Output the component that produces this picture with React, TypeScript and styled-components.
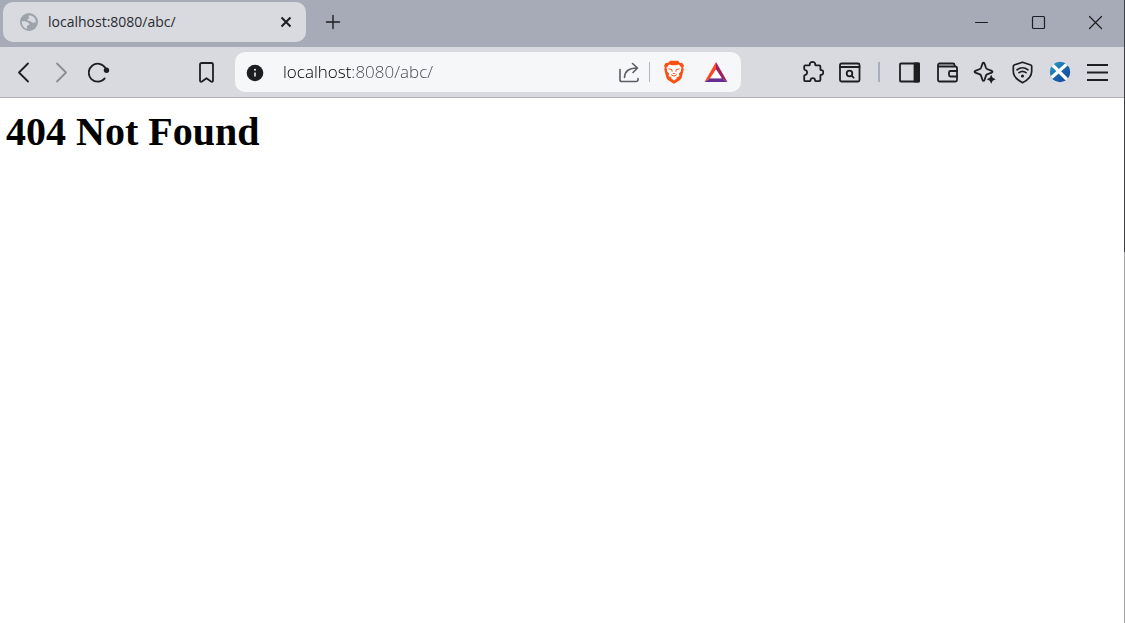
import React, { useState } from "react";
import styled, { createGlobalStyle } from "styled-components";

const uiFont = `"Open Sans", "Noto Sans", sans-serif`;

const GlobalStyle = createGlobalStyle`
  *, *::before, *::after { box-sizing: border-box; }
  body { margin: 0; background: #fff; }
`;

const Frame = styled.div`
  display: grid;
  grid-template-columns: minmax(0, 1fr) 1px;
  min-height: 100vh;
`;

const BrowserWindow = styled.div`
  display: flex;
  flex-direction: column;
  background: #fff;
`;

const WindowEdge = styled.div`
  background: linear-gradient(#3f3f42 252px, #a6a6a6 252px);
`;

const TitleBar = styled.header`
  display: flex;
  align-items: center;
  justify-content: space-between;
  height: 47px;
  padding: 0 0 3px 3px;
  background: #a7abb7;
`;

const TabStrip = styled.div`
  display: flex;
  align-items: center;
  gap: 8px;
`;

const Tab = styled.div`
  display: flex;
  align-items: center;
  gap: 9px;
  width: 303px;
  height: 40px;
  padding: 0 1px 0 16px;
  border-radius: 10px;
  background: #d9dae0;
`;

const TabTitle = styled.span`
  flex: 1;
  font: 400 14px/20px ${uiFont};
  color: #2a2b30;
`;

const Button = styled.button<{ $width?: number }>`
  display: flex;
  align-items: center;
  justify-content: center;
  flex: none;
  width: ${(p) => p.$width ?? 38}px;
  height: 36px;
  padding: 0;
  border: 0;
  border-radius: 8px;
  background: transparent;
  color: #1d1e22;

  &:disabled { color: #8b8d94; }
`;

const WindowControls = styled.div`
  display: flex;
`;

const Toolbar = styled.nav`
  display: flex;
  align-items: center;
  height: 51px;
  padding: 0 7px 0 5px;
  border-bottom: 1px solid #aeafb5;
  background: #d9dae0;
`;

const Group = styled.div`
  display: flex;
  align-items: center;
  flex: none;
`;

const BookmarkGroup = styled(Group)`
  margin: 0 9px 0 69px;
`;

const AddressBar = styled.form`
  display: flex;
  align-items: center;
  flex: 1;
  min-width: 0;
  height: 40px;
  margin-right: 52px;
  padding: 0 2px 0 1px;
  border-radius: 10px;
  background: #f6f7f9;
`;

const AddressInput = styled.input`
  flex: 1;
  min-width: 0;
  margin-left: 9px;
  padding: 0;
  border: 0;
  outline: 0;
  font: 300 17px/24px ${uiFont};
  color: transparent;
  background: linear-gradient(90deg, #000 70px, #44464c 70px);
  background-clip: text;
  -webkit-background-clip: text;
`;

const Divider = styled.span<{ $width: number; $margin: string; $color: string }>`
  width: ${(p) => p.$width}px;
  height: 20px;
  margin: ${(p) => p.$margin};
  background: ${(p) => p.$color};
`;

const Page = styled.main`
  flex: 1;
  padding: 11px 6px;
`;

const Heading = styled.h1`
  margin: 0;
  font: bold 40px/46px "Liberation Serif", "Times New Roman", serif;
  color: #000;
`;

type IconProps = { children: React.ReactNode; stroke?: number };

const Icon = ({ children, stroke = 1.8 }: IconProps) => (
  <svg
    width="24"
    height="24"
    viewBox="0 0 24 24"
    fill="none"
    stroke="currentColor"
    strokeWidth={stroke}
    strokeLinecap="round"
    strokeLinejoin="round"
    aria-hidden="true"
  >
    {children}
  </svg>
);

const Globe = () => (
  <svg width="20" height="20" viewBox="0 0 20 20" aria-hidden="true">
    <circle cx="10" cy="10" r="9" fill="#9ca3aa" />
    <path
      d="M10.5 3.2c-1 .5-1.2 1.4-.6 2 .8.7.3 1.3-.7 1.6-1.200.4-.9 1.500-.2 1.900 1.500.1 2.800.2 3.500 1.300.600.900 1.900.9 2.700.4.6-.4 1.200.1 1.700.8a7.200 7.200 0 0 0-6.400-8z"
      fill="#d9dae0"
    />
    <path
      d="M2.800 9.300c1.600-.2 4.300-.1 5.200.800.900.9 1.900.8 2.300 1.800.3 1-.8 1.300-1.800 1.500-.9.2-.6 1.100-.5 2.300l.2 1.300A7.300 7.300 0 0 1 2.800 9.300z"
      fill="#d9dae0"
    />
  </svg>
);

const BraveLion = () => (
  <svg width="24" height="24" viewBox="0 0 24 24" aria-hidden="true">
    <path
      d="M8 .8h8l2 2.200 2-.3 2 2.700-.8 2 .5 2-2.100 8.300c-.3 1-.8 1.700-1.600 2.300L13 23.300c-.7.500-1.300.5-2 0L6 20c-.8-.6-1.300-1.300-1.600-2.300L2.300 9.400l.5-2-.8-2 2-2.700 2 .3z"
      fill="#fb5013"
    />
    <path
      d="M7.200 4.600 10 5.200h4l2.800-.6 2.900 3.500-.8 1.500.2 1.400-2.400 3 .8 1.800-1.500 1.500-1.500-1 .5 1.900-3 2.400-3-2.400.5-1.900-1.500 1-1.500-1.500.8-1.800-2.400-3 .2-1.400-.8-1.500z"
      fill="#fff"
    />
    <path
      d="m6.500 8.800 3.400.8.200 2.200M17.500 8.800l-3.400.8-.2 2.200M9.200 14.800 12 16l2.800-1.200"
      fill="none"
      stroke="#fb5013"
      strokeWidth="1"
    />
    <path d="m10.300 13 1.700 1.300 1.700-1.300z" fill="#fb5013" />
  </svg>
);

const BatTriangle = () => (
  <svg width="24" height="24" viewBox="0 0 24 24" aria-hidden="true">
    <path d="M12 2 .5 22l5.800-3.800L12 9.500z" fill="#ff4724" />
    <path d="M12 2v7.500l5.700 8.700 5.800 3.800z" fill="#9e1f63" />
    <path d="m.5 22 5.800-3.800h11.400l5.800 3.800z" fill="#662d91" />
    <path d="m12 9.500-5.700 8.700h11.400z" fill="#fff" />
  </svg>
);

const BlueCross = () => (
  <svg width="24" height="24" viewBox="0 0 24 24" aria-hidden="true">
    <defs>
      <linearGradient id="cross-blue" x1="0" y1="0" x2="1" y2="1">
        <stop offset="0" stopColor="#2eb4cf" />
        <stop offset=".5" stopColor="#1767ae" />
        <stop offset="1" stopColor="#173a96" />
      </linearGradient>
      <clipPath id="cross-disc">
        <circle cx="12" cy="12" r="10.200" />
      </clipPath>
    </defs>
    <g clipPath="url(#cross-disc)">
      <rect width="24" height="24" fill="url(#cross-blue)" />
      <path d="M4 4.500 19.500 20" stroke="#fff" strokeWidth="3.200" />
      <path d="M19 4 3 18" stroke="#fff" strokeWidth="3.200" />
    </g>
  </svg>
);

export default function App() {
  const [address, setAddress] = useState("localhost:8080/abc/");

  return (
    <>
      <GlobalStyle />
      <Frame>
        <BrowserWindow>
          <TitleBar>
            <TabStrip>
              <Tab>
                <Globe />
                <TabTitle>localhost:8080/abc/</TabTitle>
                <Button aria-label="Close tab">
                  <Icon stroke={2}>
                    <path d="m7.500 7.500 9 9M16.500 7.500l-9 9" strokeLinecap="butt" />
                  </Icon>
                </Button>
              </Tab>
              <Button aria-label="New tab">
                <Icon stroke={1.4}>
                  <path d="M5.500 12h13M12 5.500v13" />
                </Icon>
              </Button>
            </TabStrip>
            <WindowControls>
              <Button $width={57} aria-label="Minimize">
                <Icon stroke={1}>
                  <path d="M5.500 12.500h12" />
                </Icon>
              </Button>
              <Button $width={57} aria-label="Maximize">
                <Icon stroke={1.2}>
                  <rect x="5.500" y="6.500" width="12" height="12" rx="1" />
                </Icon>
              </Button>
              <Button $width={57} aria-label="Close window">
                <Icon stroke={1.2}>
                  <path d="m5.500 6.500 12 12M17.500 6.500l-12 12" />
                </Icon>
              </Button>
            </WindowControls>
          </TitleBar>

          <Toolbar aria-label="Browser toolbar">
            <Group>
              <Button aria-label="Back">
                <Icon>
                  <path d="m16 3.500-9 9 9 9" />
                </Icon>
              </Button>
              <Button aria-label="Forward" disabled>
                <Icon>
                  <path d="m7 3.500 9 9-9 9" />
                </Icon>
              </Button>
              <Button aria-label="Reload">
                <Icon>
                  <path d="M17.300 7.800A9 9 0 1 0 16.700 18.400" />
                  <circle cx="18.500" cy="10.200" r="2.700" fill="currentColor" stroke="none" />
                </Icon>
              </Button>
            </Group>
            <BookmarkGroup>
              <Button aria-label="Bookmark this page">
                <Icon>
                  <path d="M5 20.500v-16a1.500 1.500 0 0 1 1.500-1.500h10a1.500 1.500 0 0 1 1.500 1.500v16c0 1.300-1 1.700-2 .9L11.500 18.200l-4.500 3.200c-1 .8-2 .4-2-.9z" />
                </Icon>
              </Button>
            </BookmarkGroup>

            <AddressBar onSubmit={(e) => e.preventDefault()}>
              <Button type="button" aria-label="Site information">
                <Icon>
                  <circle cx="12" cy="13" r="8.300" fill="currentColor" stroke="none" />
                  <circle cx="12" cy="9.800" r="1" fill="#f6f7f9" stroke="none" />
                  <path d="M12 12.500v4" stroke="#f6f7f9" strokeWidth="1.500" strokeLinecap="butt" />
                </Icon>
              </Button>
              <AddressInput
                aria-label="Address"
                value={address}
                spellCheck={false}
                onChange={(e) => setAddress(e.target.value)}
              />
              <Button type="button" aria-label="Share">
                <Icon stroke={1.6}>
                  <g stroke="#5b5d63">
                    <path d="M3 9.500v10.200a1.800 1.800 0 0 0 1.800 1.800h14.400a1.800 1.800 0 0 0 1.800-1.800v-1.200" />
                    <path d="M7.500 17.500c.2-6 4-9.500 12.500-9.500M15.500 3.500 20.500 8l-4.500 4.500" />
                  </g>
                </Icon>
              </Button>
              <Divider $width={1} $margin="0 5px 0 1px" $color="#b2b4ba" />
              <Button type="button" aria-label="Brave Shields">
                <BraveLion />
              </Button>
              <Button type="button" $width={46} aria-label="Brave Rewards">
                <BatTriangle />
              </Button>
            </AddressBar>

            <Group>
              <Button aria-label="Extensions">
                <Icon>
                  <path d="M5.300 5.300h4c.4 0 .6-.3.5-.7C9.500 2.900 11 1.900 12.500 1.900s3 1 2.700 2.700c-.1.400.1.700.5.700h3.500c.7 0 1.200.5 1.200 1.200v3c0 .4.300.6.700.6 1.300-.2 2.200.900 2.200 2.300s-.9 2.500-2.200 2.300c-.4 0-.7.2-.7.600v4.500c0 .9-.5 1.400-1.300 1.400h-3.300c-.5 0-.7-.3-.7-.700-.1-1.500-1-2.300-2.300-2.300s-2.200.8-2.300 2.300c0 .4-.2.7-.7.7H5.500c-.8 0-1.300-.5-1.300-1.300v-4c0-.4.2-.6.600-.7 1.500-.3 2.300-1.200 2.300-2.600S6.200 10 4.800 9.800c-.4-.1-.6-.3-.6-.7V6.500c0-.7.4-1.200 1.100-1.200z" strokeWidth="1.800" />
                </Icon>
              </Button>
              <Button aria-label="Search tabs">
                <Icon>
                  <rect x="2" y="3.500" width="19.500" height="18" rx="1.500" />
                  <path d="M2 7h19.500" />
                  <circle cx="11.500" cy="13.500" r="2.800" />
                  <path d="m13.800 15.800 1.800 1.800" />
                </Icon>
              </Button>
              <Divider $width={2} $margin="0 9px" $color="#a9aebb" />
              <Button aria-label="Sidebar">
                <Icon>
                  <rect x="4" y="3.500" width="19" height="18" rx="1" />
                  <path d="M18.500 3.500h4.500v18h-4.500z" fill="currentColor" />
                </Icon>
              </Button>
              <Button aria-label="Wallet">
                <Icon>
                  <path d="M20.500 6.500V5a1.500 1.500 0 0 0-1.500-1.500H5A1.500 1.500 0 0 0 4 5v15a1.500 1.500 0 0 0 1.500 1.500h16a1.500 1.500 0 0 0 1.500-1.500V8a1.500 1.500 0 0 0-1.500-1.500H5" />
                  <path d="M23 11h-6.500a1.500 1.500 0 0 0-1.500 1.500v2.500a1.500 1.500 0 0 0 1.500 1.500H23" />
                </Icon>
              </Button>
              <Button aria-label="Leo AI">
                <Icon>
                  <path d="M10.600 3.400c.4-1 1.400-1 1.800 0l1.700 4.600c.2.500.5.800 1 1l4.600 1.800c1 .4 1 1.400 0 1.800l-4.600 1.800c-.5.2-.8.500-1 1l-1.700 4.700c-.4 1-1.400 1-1.800 0l-1.700-4.700c-.2-.5-.5-.8-1-1l-4.600-1.800c-1-.4-1-1.400 0-1.800L7.900 9c.5-.2.800-.5 1-1z" />
                  <path
                    d="m19.200 14.800 1.500 3 3 1.500-3 1.500-1.500 3-1.500-3-3-1.500 3-1.500z"
                    fill="currentColor"
                    stroke="#d9dae0"
                    strokeWidth="1.500"
                    paintOrder="stroke"
                  />
                </Icon>
              </Button>
              <Button aria-label="VPN">
                <Icon stroke={1.7}>
                  <path d="M12.500 2.200 20.800 5c.6.2.9.6.9 1.200v5c0 5-3.700 8.700-9.200 11.500-5.500-2.800-9.200-6.500-9.200-11.500v-5c0-.6.300-1 .9-1.200z" />
                  <path d="M7 9.800c3.300-2.700 7.700-2.700 11 0M9 12.700c2.200-1.700 4.800-1.700 7 0" />
                  <circle cx="12.500" cy="16" r="1.600" fill="currentColor" stroke="none" />
                </Icon>
              </Button>
              <Button aria-label="Cross extension">
                <BlueCross />
              </Button>
              <Button aria-label="Menu">
                <Icon>
                  <path d="M1 5h21M1 12.500h21M1 20h21" strokeLinecap="butt" />
                </Icon>
              </Button>
            </Group>
          </Toolbar>

          <Page>
            <Heading>404 Not Found</Heading>
          </Page>
        </BrowserWindow>
        <WindowEdge />
      </Frame>
    </>
  );
}
